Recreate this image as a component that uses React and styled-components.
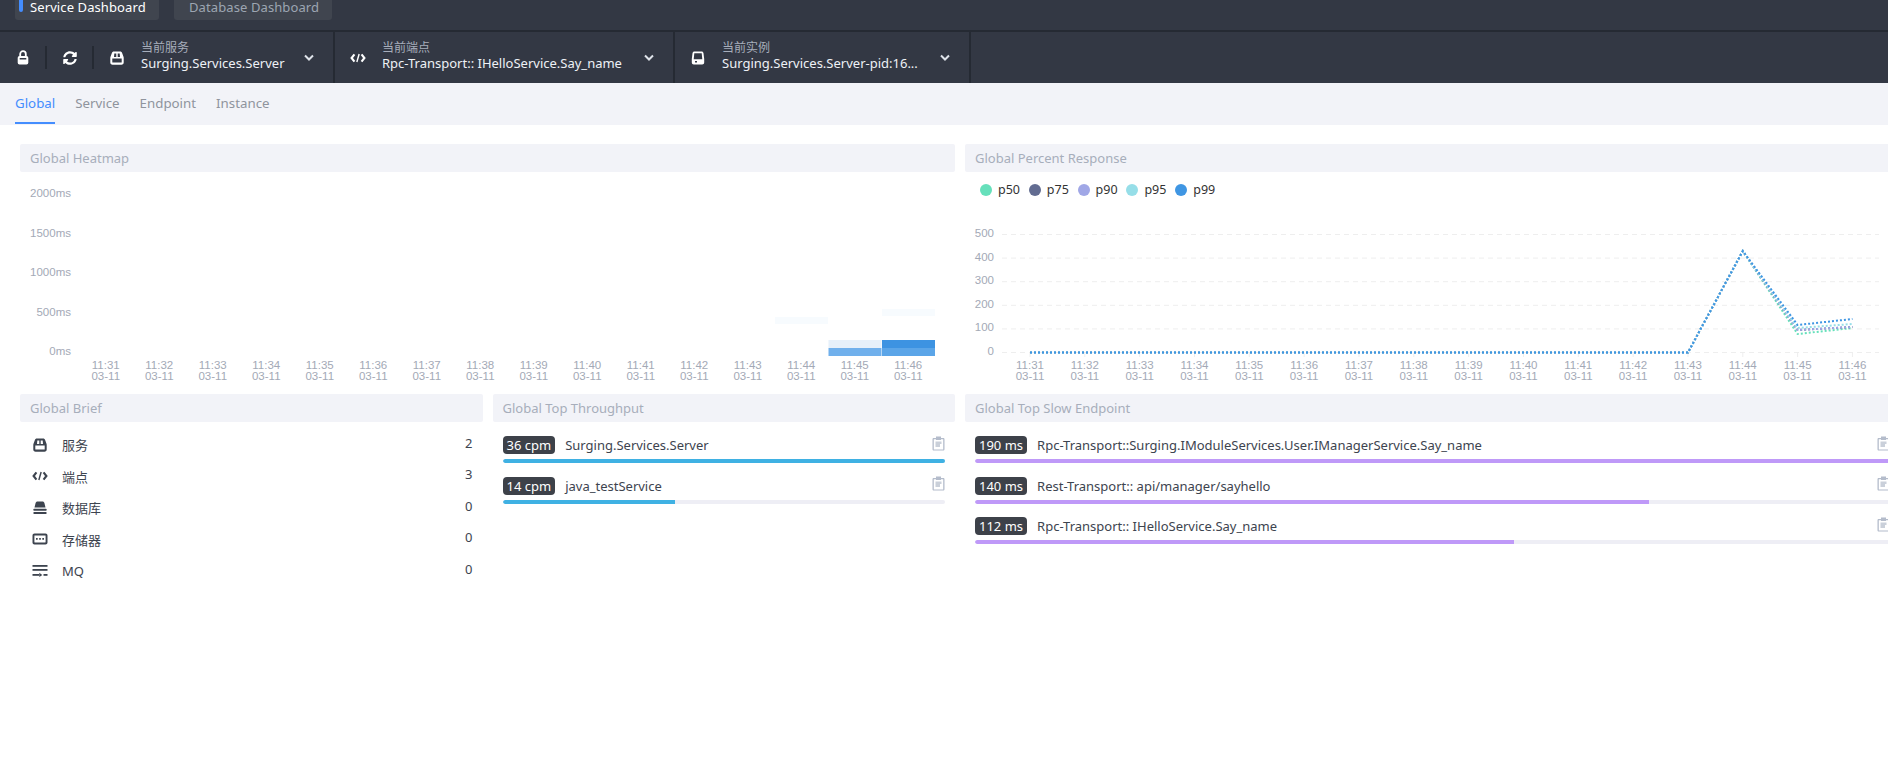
import React from "react";
import styled, { createGlobalStyle } from "styled-components";
import { FaSyncAlt } from "react-icons/fa";

const GlobalStyle = createGlobalStyle`
    html, body {
        margin: 0;
        height: 100%;
        overflow: hidden;
        background: #fff;
    }
    * {
        box-sizing: border-box;
    }
`;

const times = ["11:31", "11:32", "11:33", "11:34", "11:35", "11:36", "11:37", "11:38", "11:39", "11:40", "11:41", "11:42", "11:43", "11:44", "11:45", "11:46"];

const LockIcon = () => (
    <svg width="12" height="15" viewBox="0 0 12 15" fill="none">
        <path d="M3.200 6.500V4a2.800 2.800 0 0 1 5.600 0v2.500" stroke="currentColor" strokeWidth="1.800" />
        <path fillRule="evenodd" fill="currentColor" d="M2.500 6h7A1.800 1.800 0 0 1 11.300 7.800v4.900a1.800 1.800 0 0 1-1.800 1.800h-7a1.800 1.800 0 0 1-1.800-1.800V7.800A1.800 1.800 0 0 1 2.500 6zm.2 2v1.500h6.600V8H2.700z" />
    </svg>
);

const ServiceIcon = () => (
    <svg width="16" height="16" viewBox="0 0 16 16">
        <path fillRule="evenodd" fill="currentColor" d="M5 1.500h6c1.200 0 1.900.7 2.200 1.700l1.300 3.600c.1.300.2.700.2 1v4.700c0 1.300-.9 2.200-2.200 2.200H3.500c-1.300 0-2.200-.9-2.200-2.200V7.800c0-.3.100-.7.200-1l1.300-3.600C3.100 2.200 3.800 1.500 5 1.500zM5.300 3.500 5 7h2.300V3.500h-2zm3.400 0V7H11l-.3-3.500h-2zM3.300 8.600v3.700c0 .2.100.3.300.3h8.800c.2 0 .3-.1.300-.3V8.600H3.300z" />
    </svg>
);

const EndpointIcon = () => (
    <svg width="18" height="16" viewBox="0 0 18 16" fill="none" stroke="currentColor" strokeWidth="2.400">
        <path d="M5 4 1.800 8 5 12M13 4l3.200 4L13 12" />
        <path d="M10.300 3.500 7.700 12.500" strokeWidth="1.600" />
    </svg>
);

const InstanceIcon = () => (
    <svg width="16" height="16" viewBox="0 0 16 16">
        <path fillRule="evenodd" fill="currentColor" d="M4.500 1.500h7c1.100 0 1.800.7 2 1.700l.7 5.800v3.500c0 1.200-.8 2-2 2H3.800c-1.200 0-2-.8-2-2V9l.7-5.800c.2-1 .9-1.700 2-1.700zm-.2 1.800-.6 6h8.600l-.6-6H4.300zM5 11v1.500h2V11H5z" />
    </svg>
);

const DatabaseIcon = () => (
    <svg width="16" height="16" viewBox="0 0 16 16" fill="currentColor">
        <path d="M2.500 7.500 3.600 3c.2-.9 1-1.500 2-1.500h4.800c1 0 1.800.6 2 1.500l1.100 4.500h-11z" />
        <rect x="1.500" y="8.800" width="13" height="2" rx=".5" />
        <rect x="1.500" y="12" width="13" height="2" rx=".5" />
    </svg>
);

const CacheIcon = () => (
    <svg width="16" height="16" viewBox="0 0 16 16">
        <path fillRule="evenodd" fill="currentColor" d="M2.500 2.500h11c1.200 0 2 .8 2 2v7c0 1.200-.8 2-2 2h-11c-1.200 0-2-.8-2-2v-7c0-1.200.8-2 2-2zm.2 2.100c-.2 0-.3.100-.3.300v6.200c0 .2.100.3.300.3h10.600c.2 0 .3-.1.300-.3V4.900c0-.2-.1-.3-.3-.3H2.700zM4 7.100h1.700v1.700H4zm3.150 0h1.700v1.700h-1.700zm3.150 0H12v1.700h-1.700z" />
    </svg>
);

const QueueIcon = () => (
    <svg width="16" height="16" viewBox="0 0 16 16" fill="currentColor">
        <rect x=".5" y="2" width="15" height="1.800" />
        <rect x=".5" y="6" width="15" height="1.800" />
        <rect x=".5" y="11" width="6.800" height="1.800" />
        <path d="M7.300 9.800 10.300 11.900 7.300 14z" />
        <rect x="11.500" y="11" width="4" height="1.800" />
    </svg>
);

const ChevronIcon = () => (
    <svg width="10" height="8" viewBox="0 0 10 8" fill="none" stroke="currentColor" strokeWidth="2">
        <path d="M1 1.500 5 5.500 9 1.500" />
    </svg>
);

const ClipboardIcon = () => (
    <svg width="13" height="15" viewBox="0 0 13 15">
        <path fillRule="evenodd" fill="currentColor" d="M4 .5h5V2h2.200c.8 0 1.300.5 1.300 1.300v10c0 .8-.5 1.300-1.300 1.300H1.800c-.8 0-1.300-.5-1.300-1.300v-10C.5 2.500 1 2 1.800 2H4V.5zM1.800 3.200v10.200h9.400V3.200H9V4H4v-.8H1.800z" />
        <path fill="currentColor" opacity=".7" d="M3.500 5.500h6v2.500h-1.500v3h-4.500z" />
    </svg>
);

const HeatmapChart = () => {
    const left = 59;
    const cell = 53.5;
    const cells = [
        { col: 13, top: 145, h: 7, fill: "#f7fbfe" },
        { col: 14, top: 168, h: 8, fill: "#e6f0fa" },
        { col: 14, top: 176, h: 8, fill: "#70b0ec" },
        { col: 15, top: 137, h: 7, fill: "#f7fbfe" },
        { col: 15, top: 168, h: 8, fill: "#3d93e2" },
        { col: 15, top: 176, h: 8, fill: "#5ba5e8" },
    ];
    return (
        <S.Chart width="935" height="212">
            {["2000ms", "1500ms", "1000ms", "500ms", "0ms"].map((label, i) => (
                <S.AxisLabel key={label} x="51" y={25 + i * 39.5} textAnchor="end">{label}</S.AxisLabel>
            ))}
            {cells.map((c, i) => (
                <rect key={i} x={left + c.col * cell + 0.5} y={c.top} width={cell - 0.5} height={c.h} fill={c.fill} />
            ))}
            {times.map((t, i) => (
                <S.AxisLabel key={t} textAnchor="middle">
                    <tspan x={left + cell / 2 + i * cell} y="197">{t}</tspan>
                    <tspan x={left + cell / 2 + i * cell} y="208">03-11</tspan>
                </S.AxisLabel>
            ))}
        </S.Chart>
    );
};

const percentLines = [
    { name: "p50", color: "#66e0bb", end: [162, 156] },
    { name: "p75", color: "#626c91", end: [158, 155] },
    { name: "p90", color: "#a0a7e6", end: [158, 155] },
    { name: "p95", color: "#96dee8", end: [156, 152] },
    { name: "p99", color: "#3f96e3", end: [153, 147] },
];

const PercentChart = () => {
    const start = 65;
    const step = 54.83;
    const xAt = (i) => start + i * step;
    return (
        <S.Chart width="935" height="212">
            {[500, 400, 300, 200, 100, 0].map((label, i) => (
                <React.Fragment key={label}>
                    <S.AxisLabel x="29" y={65 + i * 23.6} textAnchor="end">{label}</S.AxisLabel>
                    <line x1="37" x2="914" y1={62.5 + i * 23.6} y2={62.5 + i * 23.6} stroke="#eeeeee" strokeDasharray="5 4" />
                </React.Fragment>
            ))}
            {times.map((t, i) => (
                <React.Fragment key={t}>
                    <line x1={xAt(i)} x2={xAt(i)} y1="180.5" y2="185" stroke="#eeeeee" />
                    <S.AxisLabel textAnchor="middle">
                        <tspan x={xAt(i)} y="197">{t}</tspan>
                        <tspan x={xAt(i)} y="208">03-11</tspan>
                    </S.AxisLabel>
                </React.Fragment>
            ))}
            {percentLines.map((line) => (
                <polyline
                    key={line.color}
                    fill="none"
                    stroke={line.color}
                    strokeWidth="2"
                    strokeDasharray="2 2"
                    points={`${xAt(0)},180.5 ${xAt(12)},180.5 ${xAt(13)},79 ${xAt(14)},${line.end[0]} ${xAt(15)},${line.end[1]}`}
                />
            ))}
        </S.Chart>
    );
};

const brief = [
    { icon: <ServiceIcon />, label: "服务", value: 2 },
    { icon: <EndpointIcon />, label: "端点", value: 3 },
    { icon: <DatabaseIcon />, label: "数据库", value: 0 },
    { icon: <CacheIcon />, label: "存储器", value: 0 },
    { icon: <QueueIcon />, label: "MQ", value: 0 },
];

const throughput = [
    { value: 36, name: "Surging.Services.Server" },
    { value: 14, name: "java_testService" },
];

const slow = [
    { value: 190, name: "Rpc-Transport::Surging.IModuleServices.User.IManagerService.Say_name" },
    { value: 140, name: "Rest-Transport:: api/manager/sayhello" },
    { value: 112, name: "Rpc-Transport:: IHelloService.Say_name" },
];

const TopList = ({ items, unit, color }) => {
    const max = items[0].value;
    return (
        <S.TopBody>
            {items.map((item) => (
                <S.TopRow key={item.name}>
                    <S.TopHead>
                        <S.Pill>{item.value} {unit}</S.Pill>
                        <S.TopName>{item.name}</S.TopName>
                        <S.CopyBtn><ClipboardIcon /></S.CopyBtn>
                    </S.TopHead>
                    <S.Track>
                        <S.Fill $color={color} style={{ width: `${(item.value / max) * 100}%` }} />
                    </S.Track>
                </S.TopRow>
            ))}
        </S.TopBody>
    );
};

const Selector = ({ icon, title, value, width }) => (
    <S.Selector $width={width}>
        <S.SelectorIcon>{icon}</S.SelectorIcon>
        <S.SelectorText>
            <S.SelectorTitle>{title}</S.SelectorTitle>
            <S.SelectorValue>{value}</S.SelectorValue>
        </S.SelectorText>
        <S.Chevron><ChevronIcon /></S.Chevron>
    </S.Selector>
);

const App = () => {
    return (
        <S.Page>
            <GlobalStyle />
            <S.NavBar>
                <S.NavTab $active>Service Dashboard</S.NavTab>
                <S.NavTab>Database Dashboard</S.NavTab>
            </S.NavBar>
            <S.Toolbar>
                <S.ToolBtn><LockIcon /></S.ToolBtn>
                <S.ToolBtn><FaSyncAlt size={14} /></S.ToolBtn>
                <Selector width={241} icon={<ServiceIcon />} title="当前服务" value="Surging.Services.Server" />
                <Selector width={340} icon={<EndpointIcon />} title="当前端点" value="Rpc-Transport:: IHelloService.Say_name" />
                <Selector width={296} icon={<InstanceIcon />} title="当前实例" value="Surging.Services.Server-pid:16..." />
            </S.Toolbar>
            <S.Tabs>
                <S.Tab $active>Global</S.Tab>
                <S.Tab>Service</S.Tab>
                <S.Tab>Endpoint</S.Tab>
                <S.Tab>Instance</S.Tab>
            </S.Tabs>
            <S.Grid>
                <S.Panel $span={2} $height={240}>
                    <S.PanelTitle>Global Heatmap</S.PanelTitle>
                    <HeatmapChart />
                </S.Panel>
                <S.Panel $span={2} $height={240}>
                    <S.PanelTitle>Global Percent Response</S.PanelTitle>
                    <S.ChartArea>
                        <S.Legend>
                            {percentLines.map((line) => (
                                <S.LegendItem key={line.name}>
                                    <S.LegendDot $color={line.color} />
                                    {line.name}
                                </S.LegendItem>
                            ))}
                        </S.Legend>
                        <PercentChart />
                    </S.ChartArea>
                </S.Panel>
                <S.Panel>
                    <S.PanelTitle>Global Brief</S.PanelTitle>
                    <S.BriefList>
                        {brief.map((row) => (
                            <S.BriefRow key={row.label}>
                                <S.BriefIcon>{row.icon}</S.BriefIcon>
                                <S.BriefLabel>{row.label}</S.BriefLabel>
                                <S.BriefValue>{row.value}</S.BriefValue>
                            </S.BriefRow>
                        ))}
                    </S.BriefList>
                </S.Panel>
                <S.Panel>
                    <S.PanelTitle>Global Top Throughput</S.PanelTitle>
                    <TopList items={throughput} unit="cpm" color="#3fb1e3" />
                </S.Panel>
                <S.Panel $span={2}>
                    <S.PanelTitle>Global Top Slow Endpoint</S.PanelTitle>
                    <TopList items={slow} unit="ms" color="#bf99f8" />
                </S.Panel>
            </S.Grid>
        </S.Page>
    );
};

export default App;

const S = {
    Page: styled.div`
        width: 1888px;
        height: 762px;
        overflow: hidden;
        background: #fff;
        color: #3d444f;
        font-family: "Noto Sans", "Noto Sans CJK SC", sans-serif;
        font-size: 13px;
    `,
    NavBar: styled.div`
        height: 30px;
        padding-left: 15px;
        display: flex;
        align-items: flex-start;
        gap: 15px;
        background: #333844;
    `,
    NavTab: styled.div`
        position: relative;
        height: 20px;
        width: ${(p) => (p.$active ? "144px" : "158px")};
        padding: 0 0 6px 15px;
        display: flex;
        align-items: center;
        border-radius: 0 0 3px 3px;
        background: #40454f;
        color: ${(p) => (p.$active ? "#ffffff" : "#9da5b2")};
        line-height: 14px;
        letter-spacing: 0.1px;
        white-space: nowrap;
        &::before {
            content: "";
            display: ${(p) => (p.$active ? "block" : "none")};
            position: absolute;
            left: 4px;
            top: 0;
            width: 4px;
            height: 12px;
            border-radius: 0 0 3px 3px;
            background: #448dfe;
        }
    `,
    Toolbar: styled.div`
        height: 53px;
        display: flex;
        align-items: stretch;
        background: #333844;
        border-top: 2px solid #252a33;
        color: #fff;
    `,
    ToolBtn: styled.div`
        width: 47px;
        height: 23px;
        align-self: center;
        display: flex;
        align-items: center;
        justify-content: center;
        border-right: 2px solid #252a33;
    `,
    Selector: styled.div`
        width: ${(p) => p.$width}px;
        padding: 0 19px 0 15px;
        display: flex;
        align-items: center;
        border-right: 2px solid #252a33;
    `,
    SelectorIcon: styled.div`
        width: 16px;
        margin-right: 16px;
        display: flex;
        align-items: center;
        justify-content: center;
    `,
    SelectorText: styled.div`
        flex: 1;
        min-width: 0;
        padding-bottom: 4px;
    `,
    SelectorTitle: styled.div`
        font-size: 12px;
        line-height: 14px;
        color: #a7aebb;
    `,
    SelectorValue: styled.div`
        font-size: 13px;
        line-height: 16px;
        color: #eef1f6;
        white-space: nowrap;
        overflow: hidden;
        text-overflow: ellipsis;
    `,
    Chevron: styled.div`
        display: flex;
        color: #dfe3ea;
    `,
    Tabs: styled.div`
        height: 42px;
        padding-left: 15px;
        display: flex;
        gap: 20px;
        background: #f2f3f8;
    `,
    Tab: styled.div`
        height: 41px;
        line-height: 41px;
        font-size: 13.3px;
        color: ${(p) => (p.$active ? "#448dfe" : "#8f949d")};
        border-bottom: 2px solid ${(p) => (p.$active ? "#448dfe" : "transparent")};
    `,
    Grid: styled.div`
        width: 1880px;
        margin: 19px 0 0 20px;
        display: grid;
        grid-template-columns: repeat(4, 462.5px);
        gap: 10px;
    `,
    Panel: styled.div`
        grid-column: span ${(p) => p.$span || 1};
        height: ${(p) => (p.$height ? `${p.$height}px` : "auto")};
        min-width: 0;
    `,
    PanelTitle: styled.div`
        height: 28px;
        padding-left: 10px;
        line-height: 28px;
        font-size: 13px;
        color: #a7aebb;
        background: #f2f3f8;
        border-radius: 2px;
    `,
    ChartArea: styled.div`
        position: relative;
    `,
    Chart: styled.svg`
        display: block;
    `,
    AxisLabel: styled.text`
        font-family: "Liberation Sans", sans-serif;
        font-size: 11.5px;
        fill: #a3a9b6;
    `,
    Legend: styled.div`
        position: absolute;
        left: 15px;
        top: 10px;
        display: flex;
    `,
    LegendItem: styled.div`
        width: 48.8px;
        display: flex;
        align-items: center;
        gap: 6px;
        font-size: 12.5px;
        line-height: 16px;
        color: #333;
    `,
    LegendDot: styled.span`
        width: 12px;
        height: 12px;
        border-radius: 50%;
        background: ${(p) => p.$color};
    `,
    BriefList: styled.div`
        padding: 7px 10px 0 12px;
    `,
    BriefRow: styled.div`
        height: 31.5px;
        display: flex;
        align-items: center;
    `,
    BriefIcon: styled.div`
        width: 16px;
        margin-right: 14px;
        display: flex;
        justify-content: center;
        color: #3d444f;
    `,
    BriefLabel: styled.div`
        flex: 1;
    `,
    BriefValue: styled.div`
        margin-top: -4px;
    `,
    TopBody: styled.div`
        padding: 14px 10px 0;
    `,
    TopRow: styled.div`
        margin-bottom: 13.5px;
    `,
    TopHead: styled.div`
        display: flex;
        align-items: center;
        height: 18px;
        margin-bottom: 5px;
    `,
    Pill: styled.div`
        height: 18px;
        padding: 0 4px;
        margin-right: 10px;
        border-radius: 4px;
        background: #3d4149;
        color: #fff;
        line-height: 18px;
        white-space: nowrap;
    `,
    TopName: styled.div`
        flex: 1;
        color: #3d444f;
        white-space: nowrap;
    `,
    CopyBtn: styled.div`
        display: flex;
        margin-top: -4px;
        color: #b4bccb;
    `,
    Track: styled.div`
        height: 4px;
        border-radius: 4px;
        background: #eeeef5;
        overflow: hidden;
    `,
    Fill: styled.div`
        height: 100%;
        border-radius: 4px 0 0 4px;
        background: ${(p) => p.$color};
    `,
};
